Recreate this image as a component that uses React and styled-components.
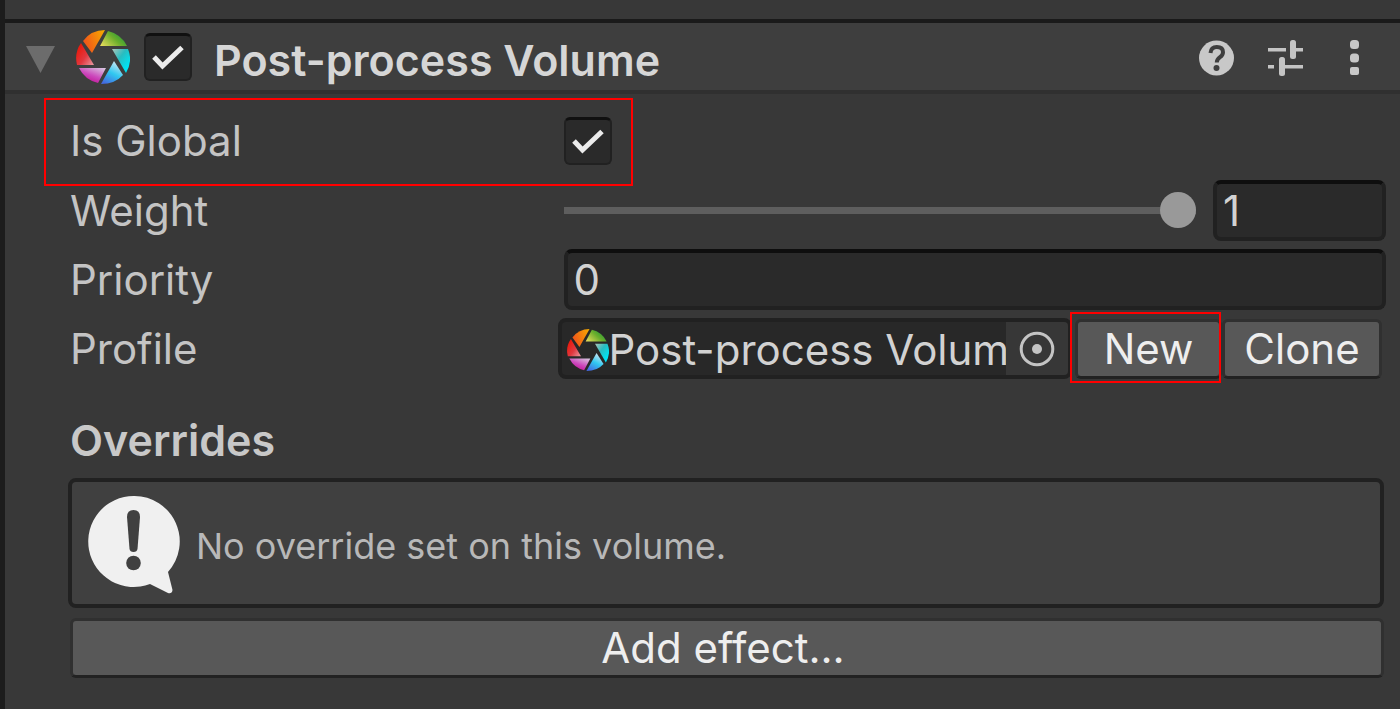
import React, { useState } from 'react';
import styled, { createGlobalStyle, css } from 'styled-components';

const Global = createGlobalStyle`
  *, *::before, *::after { box-sizing: border-box; }
  html, body, #root { min-height: 100%; }
  body { margin: 0; background: #383838; }
  body, button, input {
    font-family: Inter, Roboto, sans-serif;
    font-size: 42px;
    line-height: 52px;
    color: #c4c4c4;
  }
`;

const Inspector = styled.main`
  min-height: 100vh;
  padding-top: 19px;
  border-left: 5px solid #1c1c1c;
  background: #383838;
  overflow: hidden;
`;

const Header = styled.header`
  display: flex;
  align-items: center;
  height: 75px;
  padding: 0 40px 0 19px;
  background: #3e3e3e;
  border-top: 4px solid #1a1a1a;
  border-bottom: 4px solid #303030;
`;

const Title = styled.h2`
  flex: 1;
  margin: 6px 0 0 22px;
  font-size: 43px;
  font-weight: 600;
  color: #d6d6d6;
  white-space: nowrap;
`;

const IconButton = styled.button`
  display: flex;
  padding: 0;
  border: 0;
  background: none;
  margin-top: ${(p) => p.$drop || 0}px;
  margin-right: ${(p) => p.$after || 0}px;
`;

const Body = styled.form`
  display: flex;
  flex-direction: column;
  gap: 9px;
  padding: 17px 14px 30px 65px;
`;

const Row = styled.div`
  position: relative;
  display: grid;
  grid-template-columns: 3fr 5fr;
  align-items: center;
  height: 60px;
`;

const Label = styled.label`
  white-space: nowrap;
`;

const Controls = styled.div`
  display: flex;
  align-items: center;
  min-width: 0;
  gap: ${(p) => p.$gap || 0}px;
  ${(p) => p.$outdent && 'margin: 0 4px 0 -6px;'}
`;

const mark = css`
  content: '';
  position: absolute;
  border: 2px solid #ff0000;
  pointer-events: none;
`;

const MarkedRow = styled(Row)`
  &::after {
    ${mark}
    top: -13px;
    bottom: -15px;
    left: -26px;
    right: calc(62.5% - 69px);
  }
`;

const CheckWrap = styled.span`
  display: inline-grid;
  width: 48px;
  height: 48px;
  margin-left: ${(p) => p.$before || 0}px;
  > * { grid-area: 1 / 1; }
  > svg { pointer-events: none; }
`;

const CheckInput = styled.input`
  appearance: none;
  width: 48px;
  height: 48px;
  margin: 0;
  border: 2px solid #212121;
  border-top: 3px solid #101010;
  border-radius: 6px;
  background: #2a2a2a;
  &:not(:checked) + svg { visibility: hidden; }
`;

const Field = styled.input`
  flex: ${(p) => (p.$width ? `0 0 ${p.$width}px` : '1')};
  min-width: 0;
  width: 100%;
  height: 61px;
  padding: 0 6px;
  border: 4px solid #212121;
  border-top-color: #0e0e0e;
  border-radius: 8px;
  outline: 0;
  background: #2a2a2a;
  color: #d2d2d2;
`;

const Slider = styled.input`
  appearance: none;
  flex: 1;
  min-width: 0;
  height: 36px;
  margin: 0;
  background: none;
  &::-webkit-slider-runnable-track { height: 7px; background: #5e5e5e; }
  &::-webkit-slider-thumb {
    appearance: none;
    width: 36px;
    height: 36px;
    margin-top: -15px;
    border-radius: 50%;
    background: #999;
  }
`;

const ObjectField = styled.div`
  display: flex;
  flex: 1;
  min-width: 0;
  height: 61px;
  padding-left: 5px;
  border: 4px solid #212121;
  border-radius: 8px;
  background: #282828;
  overflow: hidden;
  > svg { flex: none; margin-top: 7px; }
`;

const ObjectName = styled.output`
  flex: 1;
  min-width: 0;
  padding-top: 2px;
  color: #d2d2d2;
  white-space: nowrap;
  overflow: hidden;
`;

const Picker = styled.button`
  display: flex;
  flex: 0 0 62px;
  align-items: center;
  justify-content: center;
  padding: 0;
  border: 0;
  background: #373737;
`;

const Button = styled.button`
  position: relative;
  flex: 0 0 auto;
  width: ${(p) => (p.$width ? `${p.$width}px` : 'auto')};
  height: 60px;
  padding: 0;
  border: 3px solid #303030;
  border-bottom-color: #222;
  border-radius: 6px;
  background: #585858;
  color: #eee;
  white-space: nowrap;
`;

const MarkedButton = styled(Button)`
  margin-left: 3px;
  &::after {
    ${mark}
    inset: -10px -2px -7px -8px;
  }
`;

const AddButton = styled(Button)`
  margin-right: 2px;
  padding-right: 8px;
`;

const SectionTitle = styled.h3`
  margin: 27px 0 3px;
  font-size: 43px;
  font-weight: 600;
  line-height: 52px;
  color: #c8c8c8;
`;

const HelpBox = styled.div`
  display: flex;
  align-items: center;
  gap: 16px;
  height: 130px;
  margin: 0 2px 1px -2px;
  padding: 4px 14px 0 16px;
  border: 4px solid #212121;
  border-radius: 8px;
  background: #404040;
`;

const HelpText = styled.p`
  margin: 2px 0 0;
  font-size: 36px;
  color: #b8b8b8;
`;

const Aperture = ({ size }) => (
  <svg width={size} height={size} viewBox="0 0 54 54" aria-hidden="true">
    <defs>
      <linearGradient id="ap-o" x1="0" y1="0.6" x2="1" y2="0.2"><stop stopColor="#f0501c" /><stop offset="1" stopColor="#f6a800" /></linearGradient>
      <linearGradient id="ap-g" x1="0" y1="1" x2="1" y2="0.4"><stop stopColor="#f0e060" /><stop offset="0.6" stopColor="#6cae2c" /><stop offset="1" stopColor="#209838" /></linearGradient>
      <linearGradient id="ap-c" x1="0" y1="0" x2="0.8" y2="0.8"><stop stopColor="#b0c4b8" /><stop offset="0.5" stopColor="#28bcc0" /><stop offset="1" stopColor="#00e4f4" /></linearGradient>
      <linearGradient id="ap-b" x1="0.7" y1="0" x2="0.2" y2="1"><stop stopColor="#d4e8f4" /><stop offset="0.5" stopColor="#30c8f0" /><stop offset="1" stopColor="#4468e0" /></linearGradient>
      <linearGradient id="ap-m" x1="0.9" y1="0" x2="0.3" y2="0.9"><stop stopColor="#d8c4e0" /><stop offset="0.6" stopColor="#cc48bc" /><stop offset="1" stopColor="#c01898" /></linearGradient>
      <linearGradient id="ap-r" x1="0.9" y1="1" x2="0.1" y2="0.3"><stop stopColor="#e89098" /><stop offset="0.5" stopColor="#e03840" /><stop offset="1" stopColor="#e81c10" /></linearGradient>
    </defs>
    <path d="M7 11Q15 0 29 0L16 23Z" fill="url(#ap-o)" />
    <path d="M32 1Q45 4 51 16H24Z" fill="url(#ap-g)" />
    <path d="M36 19H52Q57 31 50 43Z" fill="url(#ap-c)" />
    <path d="M38 31L47 45Q39 54 25 54Z" fill="url(#ap-b)" />
    <path d="M3 38H30L22 53Q9 50 3 38Z" fill="url(#ap-m)" />
    <path d="M5 13L18 35H1Q-2 23 5 13Z" fill="url(#ap-r)" />
  </svg>
);

function CheckBox({ before, ...props }) {
  const [on, setOn] = useState(true);
  return (
    <CheckWrap $before={before}>
      <CheckInput type="checkbox" checked={on} onChange={() => setOn(!on)} {...props} />
      <svg width="48" height="48" viewBox="0 0 48 48" fill="none" stroke="#ececec" strokeWidth="5" aria-hidden="true">
        <path d="M10 24L18.500 33L38 14.500" />
      </svg>
    </CheckWrap>
  );
}

export default function App() {
  const [weight, setWeight] = useState(1);
  const [priority, setPriority] = useState(0);
  return (
    <>
      <Global />
      <Inspector>
        <Header>
          <IconButton type="button" aria-label="Collapse" $after={20} $drop={6}>
            <svg width="32" height="28" viewBox="0 0 32 28"><path d="M2 0H31L16.500 27Z" fill="#6c6c6c" /></svg>
          </IconButton>
          <Aperture size={54} />
          <CheckBox before={14} aria-label="Enable Post-process Volume" />
          <Title>Post-process Volume</Title>
          <IconButton type="button" aria-label="Help" $after={34} $drop={2}>
            <svg width="35" height="36" viewBox="0 0 35 36">
              <circle cx="17.500" cy="18" r="17.500" fill="#c8c8c8" />
              <path d="M11.500 13Q12 7 17.800 7Q24 7 24 12.200Q24 15 21 17.200Q17.800 19.500 17.800 22.500" fill="none" stroke="#3e3e3e" strokeWidth="4" />
              <circle cx="17.500" cy="28" r="3" fill="#3e3e3e" />
            </svg>
          </IconButton>
          <IconButton type="button" aria-label="Presets" $after={47} $drop={2}>
            <svg width="35" height="36" viewBox="0 0 35 36" fill="#c4c4c4">
              <path d="M0 8H18V11.500H0ZM28 8H35V11.500H28ZM0 25H6V28.500H0ZM17 25H35V28.500H17Z" />
              <rect x="22" y="0" width="6" height="19" rx="2.500" />
              <rect x="11" y="17" width="6" height="19" rx="2.500" />
            </svg>
          </IconButton>
          <IconButton type="button" aria-label="More options" $drop={2}>
            <svg width="10" height="36" viewBox="0 0 10 36" fill="#c8c8c8">
              <rect x="0" y="0" width="9" height="9" rx="3.500" />
              <rect x="0" y="13.500" width="9" height="9" rx="3.500" />
              <rect x="0" y="27" width="9" height="8" rx="2" />
            </svg>
          </IconButton>
        </Header>

        <Body onSubmit={(e) => e.preventDefault()}>
          <MarkedRow>
            <Label htmlFor="global">Is Global</Label>
            <CheckBox id="global" />
          </MarkedRow>
          <Row>
            <Label htmlFor="weight">Weight</Label>
            <Controls $gap={17}>
              <Slider id="weight" type="range" min="0" max="1" step="0.01" value={weight} onChange={(e) => setWeight(e.target.value)} />
              <Field $width={173} aria-label="Weight value" value={weight} onChange={(e) => setWeight(e.target.value)} />
            </Controls>
          </Row>
          <Row>
            <Label htmlFor="priority">Priority</Label>
            <Field id="priority" value={priority} onChange={(e) => setPriority(e.target.value)} />
          </Row>
          <Row>
            <Label htmlFor="profile">Profile</Label>
            <Controls $outdent>
              <ObjectField>
                <Aperture size={42} />
                <ObjectName id="profile">Post-process Volume</ObjectName>
                <Picker type="button" aria-label="Select profile">
                  <svg width="36" height="36" viewBox="0 0 36 36">
                    <circle cx="18" cy="18" r="15.800" fill="none" stroke="#c4c4c4" strokeWidth="3" />
                    <circle cx="18" cy="18" r="5" fill="#c4c4c4" />
                  </svg>
                </Picker>
              </ObjectField>
              <MarkedButton type="button" $width={147}>New</MarkedButton>
              <Button type="button" $width={160}>Clone</Button>
            </Controls>
          </Row>

          <SectionTitle>Overrides</SectionTitle>
          <HelpBox>
            <svg width="92" height="98" viewBox="0 0 92 98" aria-hidden="true">
              <path d="M46 0A45.500 45.500 0 0 1 80 76L84.500 94Q84 98 80 97L62 88A45.500 45.500 0 1 1 46 0Z" fill="#f0f0f0" />
              <path d="M39 21Q39 14 45.500 14Q52 14 52 21L49.500 53Q49 56 45.500 56Q42 56 41.500 53Z" fill="#404040" />
              <circle cx="45.500" cy="67" r="7.300" fill="#404040" />
            </svg>
            <HelpText>No override set on this volume.</HelpText>
          </HelpBox>
          <AddButton type="button">Add effect...</AddButton>
        </Body>
      </Inspector>
    </>
  );
}
